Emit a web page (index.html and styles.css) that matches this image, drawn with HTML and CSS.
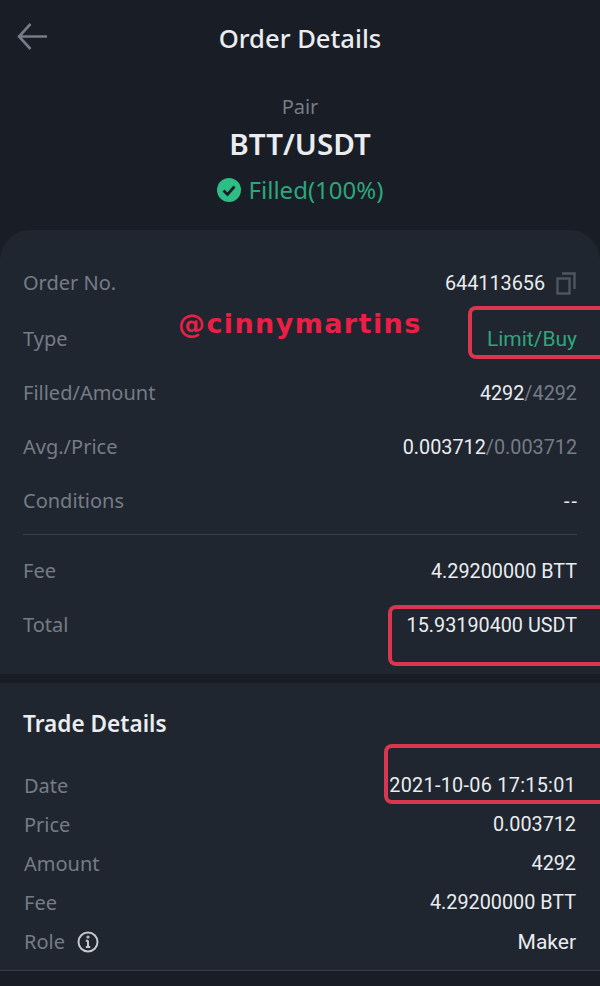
FILE: index.html
```html
<!DOCTYPE html>
<html lang="en">

<head>
    <meta charset="UTF-8">
    <meta name="viewport" content="width=device-width, initial-scale=1.0">
    <title>Order Details</title>
    <link rel="stylesheet" href="styles.css">
</head>
<body>
    <header class="topbar">
        <svg class="back-icon" width="31" height="27" viewBox="0 0 31 27" fill="none" stroke="#767c86" stroke-width="2.6">
            <path d="M30 13.5H3M13.5 1L2 13.5L13.5 26"/>
        </svg>
        <h1 class="topbar-title">Order Details</h1>
    </header>

    <section class="summary">
        <div class="summary-label">Pair</div>
        <div class="summary-pair">BTT/USDT</div>
        <div class="summary-status">
            <svg width="24" height="24" viewBox="0 0 24 24">
                <circle cx="12" cy="12" r="12" fill="#2ebd85"/>
                <path d="M6.5 12.5L10.5 16.5L17.5 8.5" fill="none" stroke="#181d26" stroke-width="2.8"/>
            </svg>
            <span>Filled(100%)</span>
        </div>
    </section>

    <section class="card order-card">
        <div class="row">
            <span class="row-label">Order No.</span>
            <span class="row-value">644113656
                <svg class="copy-icon" width="20" height="23" viewBox="0 0 20 23" fill="none" stroke="#4f555f" stroke-width="2.4">
                    <rect x="1.5" y="6.5" width="12" height="15"/>
                    <path d="M6 1.5H18.5V17"/>
                </svg>
            </span>
        </div>
        <div class="row row-type">
            <span class="row-label">Type</span>
            <span class="row-value value-green">Limit/Buy</span>
        </div>
        <div class="row">
            <span class="row-label">Filled/Amount</span>
            <span class="row-value">4292<span class="value-dim">/4292</span></span>
        </div>
        <div class="row">
            <span class="row-label">Avg./Price</span>
            <span class="row-value">0.003712<span class="value-dim">/0.003712</span></span>
        </div>
        <div class="row">
            <span class="row-label">Conditions</span>
            <span class="row-value value-dash">--</span>
        </div>
        <div class="divider"></div>
        <div class="row">
            <span class="row-label">Fee</span>
            <span class="row-value">4.29200000 BTT</span>
        </div>
        <div class="row row-total">
            <span class="row-label">Total</span>
            <span class="row-value">15.93190400 USDT</span>
        </div>
    </section>

    <section class="card trade-card">
        <h2 class="trade-title">Trade Details</h2>
        <div class="trade-row">
            <span class="row-label">Date</span>
            <span class="row-value value-date">2021-10-06 17:15:01</span>
        </div>
        <div class="trade-row">
            <span class="row-label">Price</span>
            <span class="row-value">0.003712</span>
        </div>
        <div class="trade-row">
            <span class="row-label">Amount</span>
            <span class="row-value">4292</span>
        </div>
        <div class="trade-row">
            <span class="row-label">Fee</span>
            <span class="row-value">4.29200000 BTT</span>
        </div>
        <div class="trade-row">
            <span class="row-label">Role
                <svg class="info-icon" width="22" height="22" viewBox="0 0 22 22" fill="none" stroke="#c4c8cd" stroke-width="2">
                    <circle cx="11" cy="11" r="9.5"/>
                    <path d="M11 9.5V16M8.8 16H13.2M8.8 9.8H11"/>
                    <circle cx="11" cy="6" r="0.6"/>
                </svg>
            </span>
            <span class="row-value value-maker">Maker</span>
        </div>
    </section>

    <!-- hand drawn markup on top of the screenshot -->
    <div class="watermark">@cinnymartins</div>
    <div class="mark mark-type"></div>
    <div class="mark mark-total"></div>
    <div class="mark mark-date"></div>
</body>
</html>
```

FILE: styles.css
```css
html {
    background-color: #12151c;
}

body {
    font-family: 'Noto Sans', sans-serif;
    background-color: #181d26;
    margin: 0;
    padding: 0;
    width: 600px;
    height: 986px;
    position: relative;
    overflow: hidden;
}

.topbar {
    height: 76px;
    display: flex;
    align-items: center;
    justify-content: center;
    position: relative;
}

.back-icon {
    position: absolute;
    left: 17px;
    top: 23px;
}

.topbar-title {
    margin: 0;
    font-size: 25.6px;
    font-weight: 500;
    color: #eaecef;
}

.summary {
    height: 154px;
    display: flex;
    flex-direction: column;
    align-items: center;
    box-sizing: border-box;
    padding-top: 17px;
}

.summary-label {
    font-size: 20px;
    line-height: 28px;
    color: #767c86;
}

.summary-pair {
    font-size: 29.6px;
    line-height: 38px;
    margin-top: 4px;
    font-weight: 600;
    color: #eaecef;
}

.summary-status {
    display: flex;
    align-items: center;
    gap: 8px;
    margin-top: 12px;
    font-size: 24px;
    line-height: 30px;
    color: #2fa57c;
}

.card {
    background-color: #1f2630;
    padding: 0 23px;
}

.order-card {
    border-radius: 30px 30px 0 0;
    padding-top: 26px;
    padding-bottom: 22px;
}

.row {
    height: 54px;
    display: flex;
    align-items: center;
    justify-content: space-between;
}

.row-type {
    margin-top: 2px;
}

.row-label {
    font-size: 20px;
    line-height: 26px;
    color: #767c86;
    display: flex;
    align-items: center;
    gap: 12px;
}

.row-value {
    font-family: 'Roboto', sans-serif;
    font-size: 19.8px;
    color: #eaecef;
    display: flex;
    align-items: center;
}

.value-green {
    color: #2fa57c;
    font-size: 21px;
}

.value-dim {
    color: #767c86;
}

.value-dash {
    letter-spacing: 2px;
    margin-right: -2px;
}

.value-date {
    letter-spacing: 0.3px;
}

.value-maker {
    font-size: 21px;
}

.copy-icon {
    margin-left: 11px;
    margin-right: 1px;
}

.divider {
    height: 1px;
    background-color: #3a404a;
    margin: 6px 0 9px;
}

.trade-card {
    margin-top: 9px;
    height: 288px;
    box-sizing: border-box;
    padding: 25px 24px 0;
    border-bottom: 1px solid #3a404a;
}

.trade-title {
    margin: 0 0 26px -1px;
    font-size: 22.6px;
    line-height: 32px;
    font-weight: 600;
    color: #eaecef;
}

.trade-row {
    height: 39px;
    display: flex;
    align-items: center;
    justify-content: space-between;
}

.watermark {
    position: absolute;
    left: 178px;
    top: 306px;
    font-family: 'DejaVu Sans', sans-serif;
    font-size: 27px;
    line-height: 36px;
    font-weight: 700;
    letter-spacing: 1.4px;
    color: #ea1f45;
}

.mark {
    position: absolute;
    border: 4px solid #d9374f;
    border-right: none;
    border-radius: 8px 0 0 8px;
    box-sizing: border-box;
}

.mark-type {
    left: 468px;
    top: 306px;
    width: 132px;
    height: 53px;
}

.mark-total {
    left: 388px;
    top: 605px;
    width: 212px;
    height: 61px;
}

.mark-date {
    left: 384px;
    top: 744px;
    width: 216px;
    height: 60px;
}
```
